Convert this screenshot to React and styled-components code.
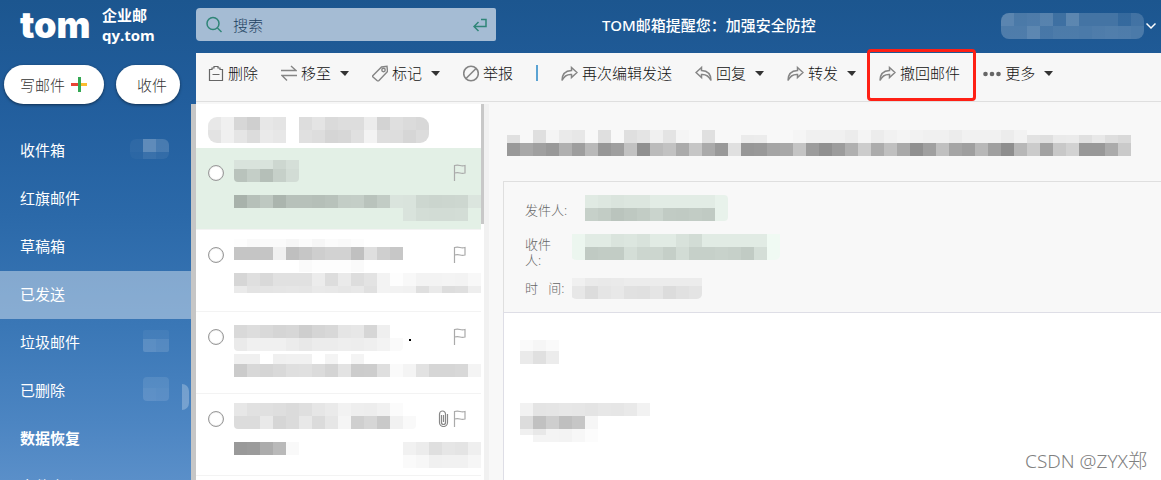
import React from "react";
import styled, { createGlobalStyle } from "styled-components";

const GlobalStyle = createGlobalStyle`
  * {
    box-sizing: border-box;
  }
  body {
    margin: 0;
    overflow: hidden;
    font-family: "Noto Sans", "Noto Sans CJK SC", sans-serif;
    font-size: 15px;
    color: #333;
  }
  button, input {
    font: inherit;
    color: inherit;
    border: 0;
    padding: 0;
    background: none;
  }
  button {
    cursor: pointer;
  }
`;

const Page = styled.div`
  position: relative;
  display: flex;
  flex-direction: column;
  height: 100vh;
  background: linear-gradient(#1c568f 0%, #215d9c 20%, #2b69a9 45%, #3a77b6 68%, #4c85c2 88%, #5a8fc9 100%);
`;

const Header = styled.header`
  display: flex;
  align-items: center;
  flex: none;
  height: 53px;
  padding: 0 5px 4px 20px;
  color: #fff;
`;

const Brand = styled.a`
  display: flex;
  align-items: center;
  gap: 10px;
  width: 176px;
  color: #fff;
  text-decoration: none;
`;

const Logo = styled.span`
  width: 72px;
  font: 900 36px/48px Inter, sans-serif;
`;

const BrandName = styled.span`
  font: 700 15px/20px "Open Sans", "Noto Sans CJK SC", sans-serif;
`;

const SearchBox = styled.form`
  display: flex;
  align-items: center;
  gap: 11px;
  width: 300px;
  height: 33px;
  padding: 0 9px 0 10px;
  border-radius: 4px 2px 2px 4px;
  background: #a5bcd4;
  color: #2f8577;

  input {
    flex: 1;
    min-width: 0;
    outline: 0;
    font-weight: 300;
    color: #20405f;
  }
  input::placeholder {
    color: #20405f;
    opacity: 1;
  }
  button {
    display: flex;
  }
`;

const Notice = styled.p`
  flex: 1;
  margin: 0 0 0 106px;
  font-weight: 500;
`;

const Account = styled.button`
  display: flex;
  align-items: center;
  gap: 2px;
  margin-top: 3px;
`;

const Body = styled.div`
  display: flex;
  flex: 1;
  min-height: 0;
`;

const Sidebar = styled.aside`
  position: relative;
  width: 196px;
  flex: none;
  overflow: hidden;
`;

const Actions = styled.div`
  display: flex;
  gap: 12px;
  height: 51px;
  padding: 12px 4px 0;
`;

const Pill = styled.button`
  display: flex;
  align-items: center;
  gap: 6px;
  height: 39px;
  padding: ${(p) => p.$pad};
  border-radius: 20px;
  background: #fff;
  box-shadow: 0 1px 3px rgba(0, 0, 0, 0.5);
  font-weight: 300;
`;

const Folders = styled.nav`
  height: 100%;
  padding-top: 23px;
  border-right: 5px solid #c6c6c6;
`;

const Folder = styled.a`
  display: flex;
  align-items: center;
  justify-content: space-between;
  height: 48px;
  padding: 0 22px 4px 20px;
  color: #fff;
  text-decoration: none;
  font-weight: ${(p) => (p.$bold ? 700 : 400)};
  background: ${(p) => (p.$active ? "rgba(255, 255, 255, 0.4)" : "none")};
`;

const Handle = styled.button`
  position: absolute;
  right: 7px;
  bottom: 70px;
  width: 7px;
  height: 26px;
  border-radius: 0 8px 8px 0;
  background: rgba(255, 255, 255, 0.25);
`;

const Main = styled.main`
  display: flex;
  flex-direction: column;
  flex: 1;
  min-width: 0;
  background: #f7f7f7;
`;

const Toolbar = styled.div`
  display: flex;
  align-items: center;
  gap: 23px;
  flex: none;
  height: 49px;
  padding: 0 12px 8px;
  border-bottom: 1px solid #dfdfdf;
`;

const Tool = styled.button`
  position: relative;
  display: flex;
  align-items: center;
  gap: 4px;
  line-height: 22px;
  white-space: nowrap;
  font-weight: 300;
  color: #111;

  svg {
    color: #858585;
  }
  ${(p) =>
    p.$marked &&
    `&::after {
      content: "";
      position: absolute;
      inset: -13px -16px -17px -12px;
      border: 3px solid #fe2015;
      border-radius: 4px;
    }`}
`;

const Caret = styled.i`
  margin-left: 5px;
  border: solid transparent;
  border-width: 5px 4px 0 5px;
  border-top-color: #333;
`;

const Divider = styled.i`
  width: 2px;
  height: 16px;
  background: #5ba3d3;
`;

const Panes = styled.div`
  display: flex;
  flex: 1;
  min-height: 0;
  padding-top: 2px;
`;

const MailList = styled.section`
  position: relative;
  width: 288px;
  flex: none;
  overflow: hidden;
  background: #fff;
`;

const ListHead = styled.div`
  height: 44px;
  padding: 13px 12px 0;
`;

const Thumb = styled.div`
  position: absolute;
  top: 0;
  right: 0;
  width: 3px;
  height: 120px;
  background: #c8c8c8;
`;

const Mail = styled.article`
  display: grid;
  grid-template-columns: 16px 1fr auto;
  grid-template-rows: 42px 39px;
  column-gap: 10px;
  margin-right: 3px;
  padding-left: 12px;
  border-bottom: 1px solid #f3f3f3;
  background: ${(p) => (p.$active ? "#e3f0e6" : "#fff")};
`;

const Pick = styled.input`
  appearance: none;
  width: 16px;
  height: 16px;
  margin: 17px 0 0;
  border: 1px solid #999 !important;
  border-radius: 50%;
  background: #fff !important;
  box-shadow: inset 0 0 1px #999;
`;

const Marks = styled.div`
  display: flex;
  gap: 4px;
  padding: 16px 15px 0 0;
  color: #aaa;
`;

const Preview = styled.div`
  grid-column: 2 / 4;
`;

const Detail = styled.section`
  flex: 1;
  min-width: 0;
  display: flex;
  flex-direction: column;
  padding-left: 14px;
  border-left: 5px solid #f1f1f1;
  background: #f8f8f8;
`;

const Subject = styled.div`
  flex: none;
  height: 77px;
  padding: 26px 0 0 4px;
`;

const Fields = styled.dl`
  display: grid;
  grid-template-columns: 46px 1fr;
  row-gap: 5px;
  flex: none;
  margin: 0;
  padding: 13px 0 10px 21px;
  border: solid #dfdfdf;
  border-width: 1px 0 0 1px;
  font-size: 13px;
  line-height: 16px;
  color: #666;

  dt {
    padding-top: 7px;
    white-space: nowrap;
    font-weight: 300;
  }
  dd {
    margin: 0;
    height: 29px;
  }
`;

const Content = styled.div`
  display: flex;
  flex-direction: column;
  gap: 39px;
  flex: 1;
  padding: 27px 16px;
  border: solid #dedee6;
  border-width: 1px 0 0 1px;
  background: #fff;
`;

const Watermark = styled.div`
  position: absolute;
  right: 14px;
  bottom: 6px;
  font-size: 19px;
  line-height: 26px;
  font-weight: 300;
  color: #808080;
`;

const MosaicSvg = styled.svg`
  display: block;
  border-radius: ${(p) => p.$round || 0}px;
`;

// hidden text: rows of 13px blocks, one hex pair per block
const CELL = 13;
const tints = {
  grey: (v) => `rgb(${v}, ${v}, ${v})`,
  green: (v) => `rgb(${v}, ${Math.min(v + 10, 255)}, ${v + 3})`,
  veil: (v) => `rgba(255, 255, 255, ${v / 255})`,
};

const Mosaic = ({ rows, tint = "grey", round }) => {
  const width = Math.max(...rows.map((r) => (r.x || 0) + r.c.split(" ").length * CELL));
  const height = Math.max(...rows.map((r) => r.y + (r.h || CELL)));
  return (
    <MosaicSvg width={width} height={height} $round={round} shapeRendering="crispEdges" aria-hidden="true">
      {rows.map((r, i) =>
        r.c.split(" ").map((c, j) =>
          c === "--" ? null : (
            <rect
              key={`${i}-${j}`}
              x={(r.x || 0) + j * CELL}
              y={r.y}
              width={CELL}
              height={r.h || CELL}
              fill={tints[tint](parseInt(c, 16))}
            />
          )
        )
      )}
    </MosaicSvg>
  );
};

const Icon = ({ w = 16, h = 17, children, ...rest }) => (
  <svg width={w} height={h} viewBox={`0 0 ${w} ${h}`} fill="none" stroke="currentColor" strokeWidth="1.2" {...rest}>
    {children}
  </svg>
);

const TrashIcon = () => (
  <Icon stroke="#666">
    <path d="M1.5 4.5v11h13v-11h-2.5v-1.500h-2v-1.500h-4v1.500h-2v1.500zM4.500 9.500h7" />
  </Icon>
);
const MoveIcon = () => (
  <Icon strokeWidth="1.400">
    <path d="M0 5.500h15L10 1M16 10.500H1l5 5" />
  </Icon>
);
const TagIcon = () => (
  <Icon strokeWidth="1.400">
    <path d="M1 10.500L9.500 2l5.500-.8.5 5.300L7 15.500q-1 .8-2 0l-4-3.500q-.7-.8 0-1.500z" />
    <circle cx="11.500" cy="5" r="1.700" />
  </Icon>
);
const BanIcon = () => (
  <Icon strokeWidth="1.600">
    <circle cx="8" cy="8.500" r="7.300" />
    <path d="M3 13.500l10-10" />
  </Icon>
);
const ForwardIcon = () => (
  <Icon w={17} strokeWidth="1.500">
    <path d="M10.500 2.500l5.500 5-5.500 5v-3Q4 9 1 15.500q0-9.500 9.500-10z" />
  </Icon>
);
const ReplyIcon = () => (
  <Icon w={17} strokeWidth="1.500">
    <path d="M6.500 2.500L1 7.500l5.500 5v-3Q13 9 16 15.500q0-9.500-9.500-10z" />
  </Icon>
);
const MoreIcon = () => (
  <Icon w={18} stroke="none" fill="#666">
    <circle cx="2.500" cy="9" r="2.300" />
    <circle cx="9" cy="9" r="2.300" />
    <circle cx="15.500" cy="9" r="2.300" />
  </Icon>
);
const SearchIcon = () => (
  <Icon strokeWidth="1.500">
    <circle cx="7" cy="7.500" r="6" />
    <path d="M11.500 12l4 4" />
  </Icon>
);
const EnterIcon = () => (
  <Icon w={14} h={14} strokeWidth="1.500">
    <path d="M8 1.500h5v7H1.500M5.500 4L1 8.500 5.500 13" />
  </Icon>
);
const PlusIcon = () => (
  <Icon stroke="none">
    <path fill="#ea4335" d="M0 7h7v3H0z" />
    <path fill="#fbbc2f" d="M9 7h7v3H9z" />
    <path fill="#34a853" d="M7 1h3v15H7z" />
  </Icon>
);
const FlagIcon = () => (
  <Icon w={13}>
    <path d="M1.500 17V1.500q3-.8 5.500 0t5 0v7.500q-2.500.8-5 0t-5.500 0" />
  </Icon>
);
const ClipIcon = () => (
  <Icon w={11} color="#888">
    <path d="M3.500 5v7.500a2 2 0 0 0 4 0V4a3 3 0 0 0-6 0v8.500a4 4 0 0 0 8 0V4M5.500 5v7" />
  </Icon>
);
const ChevronIcon = () => (
  <Icon w={10} h={8} strokeWidth="1.500">
    <path d="M.5 1.500L5 6l4.500-4.500" />
  </Icon>
);

const folders = [
  { name: "收件箱", count: [{ y: 0, c: "0c 44 2a" }, { y: 13, h: 7, c: "08 18 10" }], round: 6 },
  { name: "红旗邮件" },
  { name: "草稿箱" },
  { name: "已发送", active: true },
  { name: "垃圾邮件", count: [{ y: 0, h: 9, c: "0c 0c" }, { y: 9, c: "28 20" }], round: 2 },
  { name: "已删除", count: [{ y: 0, h: 11, c: "18 18" }, { y: 11, c: "20 1c" }], round: 4 },
  { name: "数据恢复", bold: true },
  { name: "文件中心" },
];

const tools = [
  { name: "删除", icon: <TrashIcon /> },
  { name: "移至", icon: <MoveIcon />, menu: true },
  { name: "标记", icon: <TagIcon />, menu: true },
  { name: "举报", icon: <BanIcon />, divider: true },
  { name: "再次编辑发送", icon: <ForwardIcon /> },
  { name: "回复", icon: <ReplyIcon />, menu: true },
  { name: "转发", icon: <ForwardIcon />, menu: true },
  { name: "撤回邮件", icon: <ForwardIcon />, marked: true },
  { name: "更多", icon: <MoreIcon />, menu: true },
];

const mails = [
  {
    active: true,
    tint: "green",
    sender: [{ y: 12, h: 9, c: "d9 d9 d9 cd d5" }, { y: 21, c: "b9 c4 b5 c6 d2" }],
    text: [
      { y: 5, c: "a8 b6 be ab b7 b7 b5 b8 c3 c4 b9 c2 da d9 cd cb cc cd db" },
      { y: 18, c: "-- -- -- -- -- -- -- -- -- -- -- -- -- d9 d3 d2 d2 d3" },
    ],
  },
  {
    sender: [
      { y: 9, h: 8, c: "fd f9 fa fa f6 fb f6 fb f9 fc" },
      { y: 17, c: "c5 c5 c5 f0 bf c6 ce d2 d2 c0 df cf c7" },
      { y: 30, h: 12, c: "-- -- -- -- -- fa fd fd fd fa" },
    ],
    text: [
      { y: 1, c: "d6 df d9 e1 e1 e1 ec dd ea dd e3 f3 fd f8 f3 f3 f4 f3 f8" },
      { y: 14, h: 7, c: "ea e3 e4 e5 e6 e5 e9 e8 e6 e8 e0 f3 f2 f1 df ea dd df ee" },
    ],
  },
  {
    sender: [
      { y: 13, c: "d9 dd d9 d5 d7 ce d5 d8 e5 e7 d6 ef" },
      { y: 26, c: "ea f0 f0 f0 ec e8 ec ec ee ed ef f3 fa" },
    ],
    text: [
      { y: 0, h: 10, c: "f0 f0 -- f0 f1 f1 -- f4 -- f4" },
      { y: 10, c: "cb d8 d5 d9 df e0 db d4 e3 cc cd df fa f4 e2 d6 d6 d8 f4" },
    ],
    dot: true,
  },
  {
    clip: true,
    sender: [
      { y: 9, c: "e7 e1 e0 de db df e6 ea f2 ee ed f1 fb" },
      { y: 22, c: "dc dc e9 d6 db e8 db e6 f5 cf d6 c9 f1 f9" },
    ],
    text: [
      { y: 6, c: "99 9b ac b9 f9 -- -- -- -- -- -- -- -- f1 ec df e6 e4 ef" },
      { y: 19, c: "-- -- -- -- -- -- -- -- -- -- -- -- -- fa f7 f0 f1 f1 f6" },
    ],
  },
];

const Sender = styled.div`
  display: flex;
  gap: 6px;
`;

const Dot = styled.i`
  width: 2px;
  height: 2px;
  margin-top: 27px;
  background: #000;
`;

const subject = [
  {
    y: 0,
    c: "-- -- df f4 ea e7 f8 df f8 df e4 f0 e4 f5 f8 e0 -- -- -- -- -- -- f5 f0 f0 f0 ec f4 ec f1 f4 f2 f0 f0 ec f1 f1 f1 ec f2",
  },
  {
    y: 5,
    h: 8,
    c: "e0 -- -- -- -- -- -- -- -- -- -- -- -- -- -- -- -- -- eb ec -- -- -- -- -- -- -- -- -- -- -- -- -- -- -- -- -- -- -- -- e2 df ea eb e0 e8 de d9",
  },
  {
    y: 13,
    c: "99 a8 a0 99 b0 9e b9 97 9f c2 90 bb c2 ab c6 aa 99 e0 97 99 a5 a8 c4 9c 90 9c b0 cc ac c0 a9 90 a0 c0 a5 9f b8 a0 8e b7 cb a2 c8 d2 98 98 ab ca",
  },
];

const App = () => {
  return (
    <Page>
      <GlobalStyle />
      <Header>
        <Brand href="#">
          <Logo>tom</Logo>
          <BrandName>
            企业邮
            <br />
            qy.tom
          </BrandName>
        </Brand>
        <SearchBox onSubmit={(e) => e.preventDefault()}>
          <SearchIcon />
          <input type="text" placeholder="搜索" aria-label="搜索" />
          <button type="submit" aria-label="搜索">
            <EnterIcon />
          </button>
        </SearchBox>
        <Notice>TOM邮箱提醒您：加强安全防控</Notice>
        <Account aria-label="账户">
          <Mosaic
            tint="veil"
            round={8}
            rows={[
              { y: 0, c: "46 34 38 42 26 48 2c 2c 2c 1c 2a" },
              { y: 13, c: "38 38 48 30 36 36 34 38 3a 38 34" },
            ]}
          />
          <ChevronIcon />
        </Account>
      </Header>

      <Body>
        <Sidebar>
          <Actions>
            <Pill $pad="0 17px 0 16px">
              写邮件
              <PlusIcon />
            </Pill>
            <Pill $pad="0 13px 0 21px">收件</Pill>
          </Actions>
          <Folders>
            {folders.map((f) => (
              <Folder key={f.name} href="#" $active={f.active} $bold={f.bold}>
                {f.name}
                {f.count && <Mosaic tint="veil" rows={f.count} round={f.round} />}
              </Folder>
            ))}
          </Folders>
          <Handle aria-label="收起" />
        </Sidebar>

        <Main>
          <Toolbar>
            {tools.map((t) => (
              <React.Fragment key={t.name}>
                <Tool $marked={t.marked}>
                  {t.icon}
                  {t.name}
                  {t.menu && <Caret />}
                </Tool>
                {t.divider && <Divider />}
              </React.Fragment>
            ))}
          </Toolbar>

          <Panes>
            <MailList>
              <ListHead>
                <Mosaic
                  round={9}
                  rows={[
                    { y: 0, c: "e8 f0 d7 cf e7 e4 -- dd e4 da dd dd ec d3 df db d8" },
                    { y: 13, c: "e3 f0 e5 dc ea e7 -- e0 dd d5 d7 e0 f3 de dd d6 dc" },
                  ]}
                />
              </ListHead>
              {mails.map((m, i) => (
                <Mail key={i} $active={m.active}>
                  <Pick type="radio" name="mail" aria-label={`邮件 ${i + 1}`} />
                  <Sender>
                    <Mosaic rows={m.sender} tint={m.tint} round={4} />
                    {m.dot && <Dot />}
                  </Sender>
                  <Marks>
                    {m.clip && <ClipIcon />}
                    <FlagIcon />
                  </Marks>
                  <Preview>
                    <Mosaic rows={m.text} tint={m.tint} />
                  </Preview>
                </Mail>
              ))}
              <Thumb />
            </MailList>

            <Detail>
              <Subject>
                <Mosaic rows={subject} />
              </Subject>
              <Fields>
                <dt>发件人:</dt>
                <dd>
                  <Mosaic
                    tint="green"
                    round={4}
                    rows={[
                      { y: 0, x: 14, c: "e0 dd da dc dc e2 e2 e2 e2 e2 e8" },
                      { y: 13, x: 14, c: "c6 c2 ba be c2 ca c1 c0 c2 c0 e8" },
                    ]}
                  />
                </dd>
                <dt>
                  收件
                  <br />
                  人:
                </dt>
                <dd>
                  <Mosaic
                    tint="green"
                    round={5}
                    rows={[
                      { y: 5, x: 1, c: "ec e1 e1 da dc d8 e1 e1 d8 d2 e1 e1 e1 e1 e1 f0" },
                      { y: 18, x: 1, c: "ec c0 c2 c2 d4 cc cc c5 d2 c6 c6 c8 c6 c1 d4 f0" },
                    ]}
                  />
                </dd>
                <dt>时&nbsp;&nbsp;&nbsp;间:</dt>
                <dd>
                  <Mosaic
                    round={5}
                    rows={[
                      { y: 5, h: 8, x: 1, c: "f0 ea e9 ea ec ec ec ec ec ec" },
                      { y: 13, x: 1, c: "e7 dc e5 e8 e1 e0 e5 dc e1 e4" },
                    ]}
                  />
                </dd>
              </Fields>
              <Content>
                <Mosaic
                  rows={[
                    { y: 0, h: 11, c: "fa f6 fa" },
                    { y: 11, c: "ea e0 ec" },
                  ]}
                />
                <Mosaic
                  rows={[
                    { y: 0, c: "f2 e4 e5 e7 e6 e4 e7 e6 e9 f2" },
                    { y: 13, c: "dc c1 ce bf c6 f6" },
                    { y: 26, c: "-- f4 f4 f3 f7 fc" },
                    { y: 26, h: 6, c: "f0 e8" },
                  ]}
                />
              </Content>
            </Detail>
          </Panes>
        </Main>
      </Body>
      <Watermark>CSDN @ZYX郑</Watermark>
    </Page>
  );
};

export default App;
